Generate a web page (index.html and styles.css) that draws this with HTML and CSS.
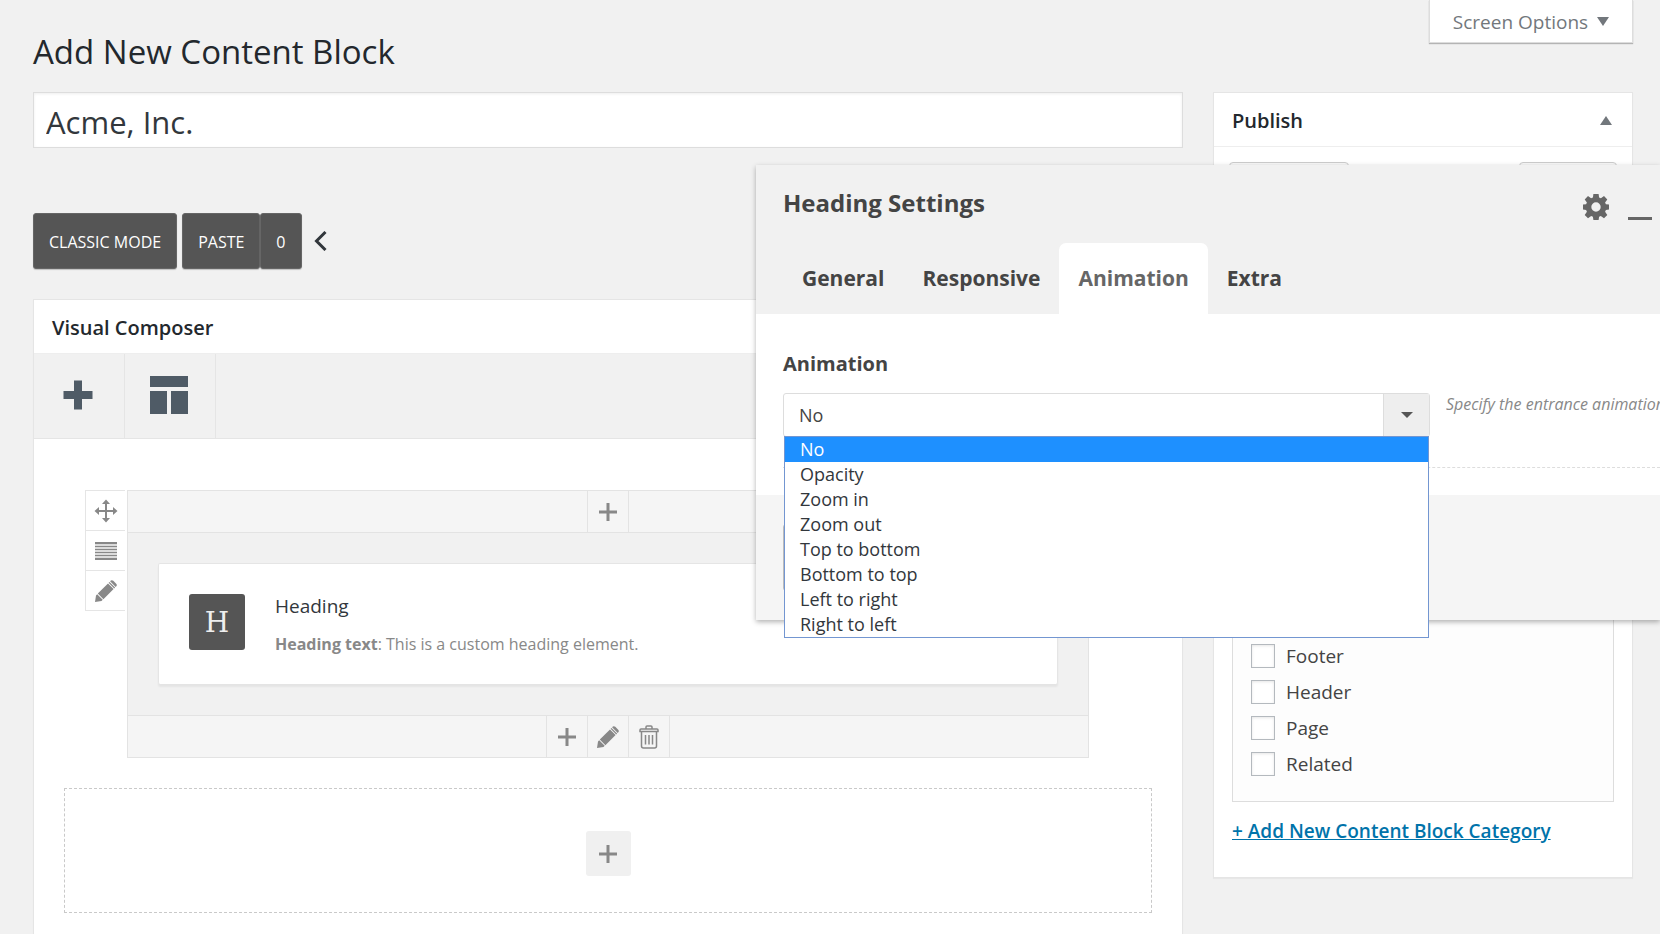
FILE: index.html
```html
<!DOCTYPE html>
<html lang="en">
<head>
    <meta charset="UTF-8">
    <meta name="viewport" content="width=device-width, initial-scale=1.0">
    <title>Add New Content Block</title>
    <link rel="stylesheet" href="styles.css">
</head>
<body>

<svg class="sprite" aria-hidden="true">
    <symbol id="icon-plus" viewBox="0 0 20 20">
        <path d="M8.5 1h3v7.5H19v3h-7.5V19h-3v-7.5H1v-3h7.5z"/>
    </symbol>
    <symbol id="icon-pencil" viewBox="0 0 22 22">
        <path d="M0 22l1-6.500 1.200-1.200 5.500 5.500-1.200 1.200zM2.800 13.600L13 3.400l5.600 5.600L8.400 19.200zM13.600 2.800l.9-.9 5.600 5.600-.9.900zM15.100 1.300l.8-.8q1.200-.8 2.400.3l2.900 2.900q1.100 1.200.3 2.400l-.8.800z"/>
    </symbol>
    <symbol id="icon-trash" viewBox="0 0 20 24">
        <path d="M7 3.500V2q0-1 1-1h4q1 0 1 1v1.500M1 6.500V5q0-1 1-1h16q1 0 1 1v1.500zM2.500 7v14q0 2 2 2h11q2 0 2-2V7M6.500 10v9.500M10 10v9.500M13.500 10v9.500" fill="none" stroke="currentColor" stroke-width="1.500"/>
    </symbol>
</svg>

<div class="wrap">
    <header class="page-header">
        <h1>Add New Content Block</h1>
        <button class="screen-options">Screen Options <span class="arrow-down"></span></button>
    </header>

    <div class="columns">
        <main class="main">
            <input type="text" class="title-input" aria-label="Title" value="Acme, Inc.">

            <div class="switch-bar">
                <button class="dark-btn">Classic mode</button>
                <div class="btn-group">
                    <button class="dark-btn">Paste</button>
                    <button class="dark-btn">0</button>
                </div>
                <button class="collapse-btn" aria-label="Collapse">
                    <svg width="13" height="20" viewBox="0 0 13 20"><path d="M11.500 1L2.500 10l9 9" fill="none" stroke="currentColor" stroke-width="3"/></svg>
                </button>
            </div>

            <section class="postbox composer">
                <h2 class="postbox-title">Visual Composer</h2>
                <div class="toolbar">
                    <button class="tool" aria-label="Add element">
                        <svg width="30" height="30" viewBox="0 0 30 30"><path d="M11 0.500h8V11h10.500v8H19v10.500h-8V19H0.500v-8H11z"/></svg>
                    </button>
                    <button class="tool" aria-label="Templates">
                        <svg width="38" height="38" viewBox="0 0 38 38"><path d="M0 0h38v11H0zM0 15h17v23H0zM21 15h17v23H21z"/></svg>
                    </button>
                </div>

                <div class="row">
                    <div class="row-controls">
                        <button aria-label="Move row">
                            <svg width="24" height="24" viewBox="0 0 24 24"><path d="M12 0.500l4 4.500h-3v6h6V8l4.500 4-4.500 4v-3h-6v6h3l-4 4.500L8 19h3v-6H5v3L0.500 12 5 8v3h6V5H8z"/></svg>
                        </button>
                        <button aria-label="Row layout">
                            <svg width="22" height="18" viewBox="0 0 22 18"><path d="M0 0h22v18H0z" opacity=".3"/><path d="M0 0h22v2H0zM0 4h22v1H0zM0 7h22v1H0zM0 10h22v1H0zM0 13h22v1H0zM0 16h22v2H0z"/></svg>
                        </button>
                        <button aria-label="Edit row">
                            <svg width="22" height="22"><use href="#icon-pencil"/></svg>
                        </button>
                    </div>

                    <div class="column">
                        <div class="column-bar">
                            <button aria-label="Prepend element"><svg width="20" height="20"><use href="#icon-plus"/></svg></button>
                        </div>
                        <div class="column-body">
                            <article class="element">
                                <div class="element-icon">H</div>
                                <div class="element-text">
                                    <h3>Heading</h3>
                                    <p><strong>Heading text</strong>: This is a custom heading element.</p>
                                </div>
                            </article>
                        </div>
                        <div class="column-bar column-bar-bottom">
                            <button aria-label="Append element"><svg width="20" height="20"><use href="#icon-plus"/></svg></button>
                            <button aria-label="Edit column"><svg width="22" height="22"><use href="#icon-pencil"/></svg></button>
                            <button aria-label="Delete column"><svg width="20" height="24"><use href="#icon-trash"/></svg></button>
                        </div>
                    </div>
                </div>

                <div class="drop-area">
                    <button aria-label="Add row"><svg width="20" height="20"><use href="#icon-plus"/></svg></button>
                </div>
            </section>
        </main>

        <aside class="side">
            <section class="postbox publish">
                <h2 class="postbox-title">Publish <span class="arrow-up"></span></h2>
                <div class="publish-actions">
                    <button class="light-btn wide" aria-label="Save"></button>
                    <button class="light-btn" aria-label="Preview"></button>
                </div>
                <div class="categories">
                    <label><input type="checkbox"> Footer</label>
                    <label><input type="checkbox"> Header</label>
                    <label><input type="checkbox"> Page</label>
                    <label><input type="checkbox"> Related</label>
                </div>
                <a href="#" class="add-category">+ Add New Content Block Category</a>
            </section>
        </aside>
    </div>
</div>

<div class="settings" role="dialog" aria-labelledby="settings-title">
    <div class="settings-header">
        <div class="settings-top">
            <h2 id="settings-title">Heading Settings</h2>
            <button aria-label="Settings">
                <svg width="26" height="26" viewBox="0 0 26 26"><path fill-rule="evenodd" d="M10.400 0h5.200l.5 3.500 1.800.8 3.100-2.200 3.300 3.300-2.200 3.100.8 1.800 3.100.3v4.800l-3.100.5-.8 1.800 2.200 3.200-3.300 3.300-3.200-2.300-1.700.8-.5 3.300h-5.200l-.5-3.300-1.700-.8-3.200 2.300-3.300-3.300 2.200-3.200-.8-1.800-3.100-.5v-4.800l3.100-.3.8-1.800-2.200-3.100 3.300-3.300 3.100 2.200 1.800-.8zM13 8.300a4.700 4.700 0 1 0 0 9.400 4.700 4.700 0 0 0 0-9.400z"/></svg>
            </button>
            <button aria-label="Minimize">
                <svg width="24" height="26" viewBox="0 0 24 26"><path d="M0 23h24v3H0z"/></svg>
            </button>
        </div>
        <nav class="tabs">
            <button>General</button>
            <button>Responsive</button>
            <button class="active">Animation</button>
            <button>Extra</button>
        </nav>
    </div>

    <div class="settings-body">
        <div class="field">
            <label for="animation">Animation</label>
            <div class="field-row">
                <div class="select-wrap">
                    <select id="animation">
                        <option>No</option>
                    </select>
                    <span class="select-arrow"></span>
                    <ul class="options" role="listbox">
                        <li class="selected" role="option" aria-selected="true">No</li>
                        <li role="option">Opacity</li>
                        <li role="option">Zoom in</li>
                        <li role="option">Zoom out</li>
                        <li role="option">Top to bottom</li>
                        <li role="option">Bottom to top</li>
                        <li role="option">Left to right</li>
                        <li role="option">Right to left</li>
                    </ul>
                </div>
                <p class="description">Specify the entrance animation</p>
            </div>
        </div>
    </div>

    <div class="settings-footer">
        <button class="save-btn" aria-label="Save changes"></button>
    </div>
</div>

</body>
</html>
```
FILE: styles.css
```css
* {
    box-sizing: border-box;
}
body {
    margin: 0;
    height: 100vh;
    overflow: hidden;
    position: relative;
    background-color: #f1f1f1;
    color: #444;
    font-family: "Open Sans", "Noto Sans", sans-serif;
    font-size: 19px;
}
button, input, select {
    font-family: inherit;
    margin: 0;
}
button {
    display: flex;
    align-items: center;
    justify-content: center;
    padding: 0;
    border: none;
    background: none;
    color: inherit;
    cursor: pointer;
}
h1, h2, h3, p, ul {
    margin: 0;
    padding: 0;
}
svg {
    display: block;
    fill: currentColor;
}
.sprite {
    display: none;
}

/* page */
.wrap {
    padding: 0 27px 0 33px;
}
.page-header {
    display: flex;
    justify-content: space-between;
    align-items: flex-start;
    height: 92px;
}
h1 {
    padding-top: 29px;
    font-size: 33px;
    font-weight: 400;
    line-height: 46px;
    color: #23282d;
}
.screen-options {
    gap: 9px;
    width: 204px;
    height: 43px;
    padding-top: 1px;
    border: 1px solid #ddd;
    border-top: none;
    background-color: #fff;
    box-shadow: 0 1px 1px rgba(0, 0, 0, 0.25);
    font-size: 19px;
    color: #72777c;
}
.arrow-down, .arrow-up {
    border: 6px solid transparent;
}
.arrow-down {
    border-top: 9px solid #72777c;
    border-bottom: none;
}
.arrow-up {
    border-bottom: 9px solid #72777c;
    border-top: none;
}
.columns {
    display: flex;
    align-items: flex-start;
    gap: 30px;
}
.main {
    flex: 1;
}
.side {
    width: 420px;
}
.title-input {
    display: block;
    width: 100%;
    height: 56px;
    padding: 4px 12px 0;
    border: 1px solid #ddd;
    background-color: #fff;
    box-shadow: inset 0 1px 3px rgba(0, 0, 0, 0.07);
    font-size: 31px;
    color: #32373c;
}
.switch-bar {
    display: flex;
    align-items: center;
    gap: 5px;
    margin: 65px 0 30px;
}
.btn-group {
    display: flex;
}
.dark-btn {
    height: 56px;
    padding: 2px 15px 0;
    border: 1px solid #666;
    border-radius: 3px;
    background-color: #555;
    box-shadow: 0 1px 1px rgba(0, 0, 0, 0.2);
    font-size: 16px;
    text-transform: uppercase;
    color: #fff;
}
.collapse-btn {
    margin-left: 7px;
    color: #32373c;
}

.postbox {
    border: 1px solid #e5e5e5;
    background-color: #fff;
    box-shadow: 0 1px 1px rgba(0, 0, 0, 0.04);
}
.postbox-title {
    display: flex;
    justify-content: space-between;
    align-items: center;
    height: 54px;
    padding: 2px 20px 0 18px;
    border-bottom: 1px solid #eee;
    font-size: 20px;
    font-weight: 600;
    color: #23282d;
}

/* composer */
.composer {
    padding-bottom: 30px;
}
.toolbar {
    display: flex;
    height: 85px;
    border-bottom: 1px solid #e5e5e5;
    background-color: #f1f1f1;
}
.tool {
    width: 91px;
    padding: 0 2px 2px 0;
    border-right: 1px solid #e5e5e5;
    color: #4f5b66;
}
.row {
    display: flex;
    align-items: flex-start;
    gap: 2px;
    padding: 51px 93px 30px 51px;
    color: #888;
}
.row-controls {
    width: 40px;
    border: 1px solid #e5e5e5;
    border-right: none;
}
.row-controls button {
    width: 100%;
    height: 39px;
}
.row-controls button + button {
    height: 40px;
    border-top: 1px solid #e5e5e5;
}
.column {
    flex: 1;
    border: 1px solid #e3e3e3;
    background-color: #f1f1f1;
}
.column-bar {
    display: flex;
    justify-content: center;
    height: 42px;
    border-bottom: 1px solid #e3e3e3;
    background-color: #f5f5f5;
}
.column-bar-bottom {
    border-top: 1px solid #e3e3e3;
    border-bottom: none;
}
.column-bar button {
    width: 41px;
    border-right: 1px solid #e3e3e3;
}
.column-bar button:first-child {
    width: 42px;
    border-left: 1px solid #e3e3e3;
}
.column-body {
    padding: 30px 30px 31px;
}
.element {
    display: flex;
    gap: 30px;
    padding: 30px 30px 28px;
    border: 1px solid #e5e5e5;
    border-bottom: none;
    border-radius: 2px;
    background-color: #fff;
    box-shadow: 0 3px 2px rgba(0, 0, 0, 0.05);
}
.element-icon {
    display: flex;
    align-items: center;
    justify-content: center;
    width: 56px;
    height: 56px;
    border-radius: 3px;
    background-color: #555;
    font-family: "DejaVu Serif", serif;
    font-size: 28px;
    color: #eee;
}
.element-text h3 {
    margin-bottom: 14px;
    font-size: 19px;
    font-weight: 400;
    line-height: 24px;
    color: #32373c;
}
.element-text p {
    font-size: 16px;
    line-height: 24px;
}
.drop-area {
    display: flex;
    align-items: center;
    justify-content: center;
    height: 125px;
    margin: 0 30px;
    padding-top: 6px;
    border: 1px dashed #c9c9c9;
    color: #888;
}
.drop-area button {
    width: 45px;
    height: 45px;
    border-radius: 3px;
    background-color: #f0f0f0;
}

/* sidebar */
.publish-actions {
    display: flex;
    justify-content: space-between;
    padding: 15px 15px 30px;
}
.light-btn {
    width: 98px;
    height: 39px;
    border: 1px solid #ccc;
    border-radius: 4px;
    background-color: #f7f7f7;
}
.light-btn.wide {
    width: 120px;
}
.categories {
    display: flex;
    flex-direction: column;
    justify-content: flex-end;
    gap: 12px;
    height: 571px;
    margin: 0 18px;
    padding: 0 18px 25px;
    border: 1px solid #ddd;
    background-color: #fdfdfd;
}
.categories label {
    display: flex;
    align-items: center;
    gap: 11px;
    height: 24px;
}
.categories input {
    appearance: none;
    width: 24px;
    height: 24px;
    border: 1px solid #b4b9be;
    background-color: #fff;
    box-shadow: inset 0 1px 3px rgba(0, 0, 0, 0.1);
}
.add-category {
    display: block;
    margin: 15px 18px 32px;
    font-size: 19px;
    font-weight: 600;
    line-height: 28px;
    color: #0073aa;
}

/* settings window */
.settings {
    position: absolute;
    top: 165px;
    left: 756px;
    right: 0;
    background-color: #fff;
    box-shadow: 0 2px 5px rgba(0, 0, 0, 0.3);
}
.settings-header {
    background-color: #f1f1f1;
}
.settings-top {
    display: flex;
    align-items: center;
    gap: 19px;
    height: 78px;
    padding: 0 8px 0 27px;
    color: #666;
}
.settings-top h2 {
    flex: 1;
    padding-bottom: 4px;
    font-size: 24px;
    font-weight: 700;
    color: #444;
}
.settings-top button {
    padding-top: 6px;
}
.tabs {
    display: flex;
    padding: 0 27px;
}
.tabs button {
    height: 71px;
    padding: 0 19px 2px;
    border-radius: 7px 7px 0 0;
    font-size: 21px;
    font-weight: 700;
    color: #444;
}
.tabs .active {
    background-color: #fff;
    color: #666;
}
.settings-body {
    padding: 36px 0 27px 27px;
}
.field {
    height: 118px;
    border-bottom: 1px dashed #ddd;
}
.field label {
    display: block;
    margin-bottom: 15px;
    font-size: 20px;
    font-weight: 700;
    line-height: 28px;
}
.field-row {
    display: flex;
    gap: 16px;
}
.select-wrap {
    position: relative;
    width: 647px;
}
.select-wrap select {
    appearance: none;
    display: block;
    width: 100%;
    height: 44px;
    padding: 0 15px;
    border: 1px solid #ddd;
    border-radius: 3px;
    background-color: #fff;
    font-size: 18px;
    color: #444;
}
.select-arrow {
    position: absolute;
    top: 1px;
    right: 1px;
    display: flex;
    align-items: center;
    justify-content: center;
    width: 46px;
    height: 42px;
    border-left: 1px solid #ddd;
    background-color: #eee;
    pointer-events: none;
}
.select-arrow::before {
    content: "";
    border: 6px solid transparent;
    border-top-color: #555;
    border-bottom: none;
}
.options {
    position: absolute;
    z-index: 1;
    top: 43px;
    left: 1px;
    right: 1px;
    border: 1px solid #7396d1;
    background-color: #fff;
    list-style: none;
}
.options li {
    padding-left: 15px;
    font-size: 18px;
    line-height: 25px;
    color: #32373c;
}
.options .selected {
    background-color: #1e90ff;
    color: #fff;
}
.description {
    flex: 1;
    overflow: hidden;
    font-size: 16px;
    font-style: italic;
    line-height: 22px;
    white-space: nowrap;
    color: #888;
}
.settings-footer {
    height: 125px;
    padding: 29px 27px;
    background-color: #f5f5f5;
}
.save-btn {
    width: 180px;
    height: 67px;
    border: 1px solid #bbb;
    border-radius: 3px;
}
```
